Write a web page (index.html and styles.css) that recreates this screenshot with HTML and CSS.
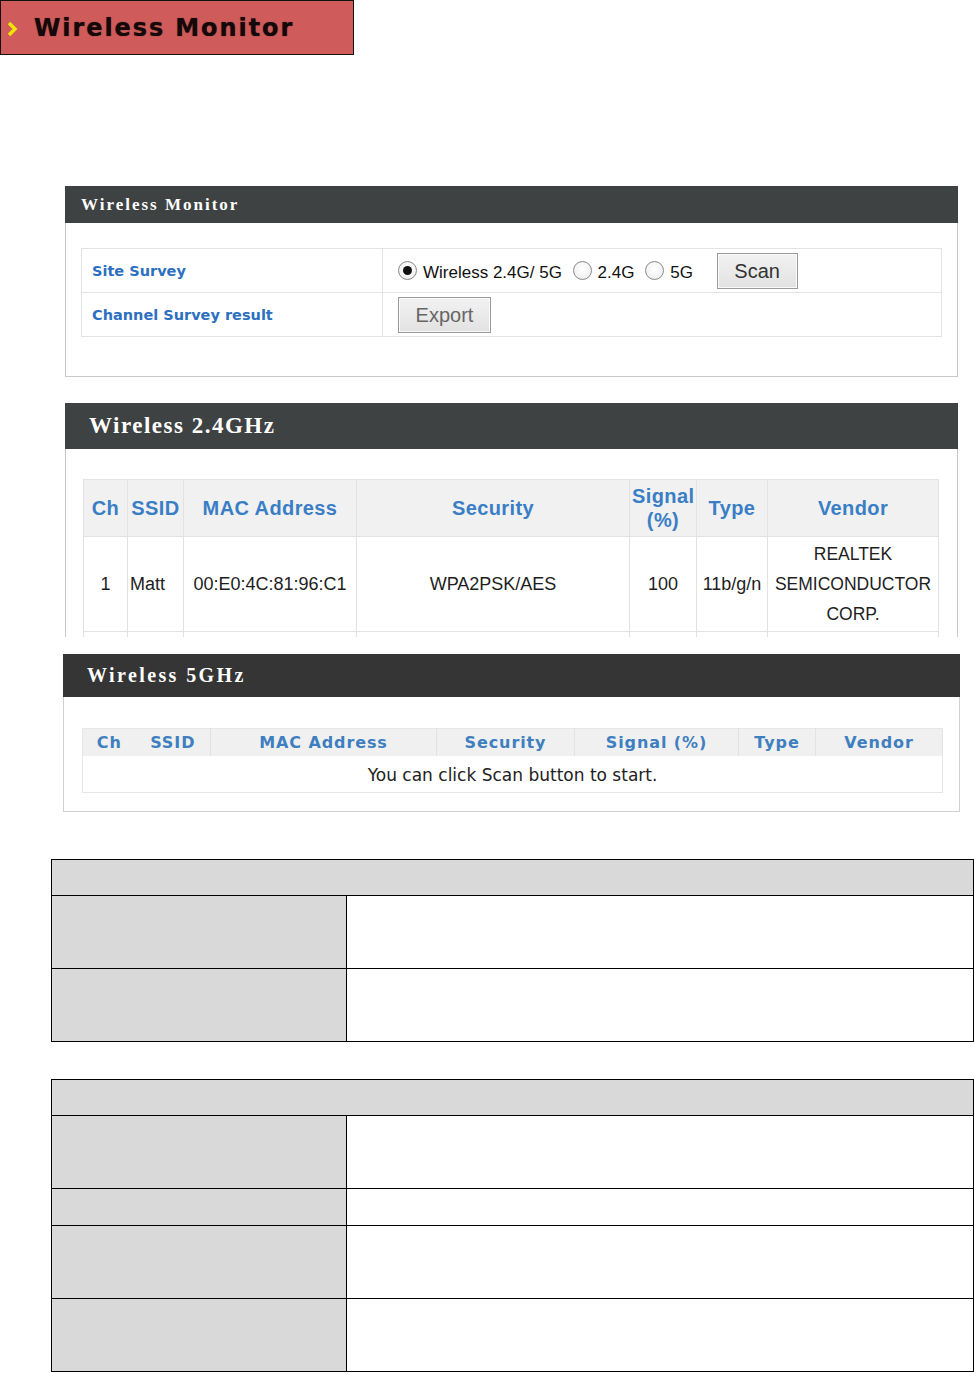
FILE: index.html
```html
<!DOCTYPE html>
<html>
<head>
<meta charset="utf-8">
<link rel="stylesheet" href="styles.css">
</head>
<body>
<div class="banner">
  <svg class="chev" width="12" height="16" viewBox="0 0 12 16"><polyline points="3,2 9,8 3,14" fill="none" stroke="#f2e400" stroke-width="3.4"/></svg>
  <span class="banner-text">Wireless Monitor</span>
</div>

<div class="panel p1">
  <div class="panel-head h1">Wireless Monitor</div>
  <div class="panel-body b1">
    <table class="survey">
      <colgroup><col class="c-label"><col></colgroup>
      <tr>
        <td class="lbl">Site Survey</td>
        <td class="ctl">
          <span class="radio on"></span><span class="rtext">Wireless 2.4G/ 5G</span>
          <span class="radio"></span><span class="rtext">2.4G</span>
          <span class="radio"></span><span class="rtext">5G</span>
          <span class="btn scan">Scan</span>
        </td>
      </tr>
      <tr>
        <td class="lbl">Channel Survey result</td>
        <td class="ctl"><span class="btn export">Export</span></td>
      </tr>
    </table>
  </div>
</div>

<div class="panel p2">
  <div class="panel-head h2">Wireless 2.4GHz</div>
  <div class="panel-body b2">
    <table class="scan24">
      <colgroup>
        <col style="width:44px"><col style="width:56px"><col style="width:173px"><col style="width:273px"><col style="width:67px"><col style="width:71px"><col style="width:171px">
      </colgroup>
      <tr class="hd">
        <th>Ch</th><th>SSID</th><th>MAC Address</th><th>Security</th><th>Signal<br>(%)</th><th>Type</th><th>Vendor</th>
      </tr>
      <tr class="row">
        <td>1</td><td class="left">Matt</td><td>00:E0:4C:81:96:C1</td><td>WPA2PSK/AES</td><td>100</td><td>11b/g/n</td><td class="vendor">REALTEK SEMICONDUCTOR CORP.</td>
      </tr>
      <tr class="row2">
        <td></td><td></td><td></td><td></td><td></td><td></td><td></td>
      </tr>
    </table>
  </div>
</div>

<div class="panel p3">
  <div class="panel-head h3">Wireless 5GHz</div>
  <div class="panel-body b3">
    <table class="scan5">
      <colgroup>
        <col style="width:53px"><col style="width:75px"><col style="width:226px"><col style="width:138px"><col style="width:164px"><col style="width:77px"><col style="width:127px">
      </colgroup>
      <tr class="hd">
        <th class="nb">Ch</th><th class="nb">SSID</th><th>MAC Address</th><th>Security</th><th>Signal (%)</th><th>Type</th><th>Vendor</th>
      </tr>
      <tr class="row">
        <td colspan="7">You can click Scan button to start.</td>
      </tr>
    </table>
  </div>
</div>

<table class="doc doc-a">
  <colgroup><col class="ck"><col></colgroup>
  <tr class="dh"><td colspan="2"></td></tr>
  <tr class="tall"><td class="k"></td><td class="v"></td></tr>
  <tr class="tall"><td class="k"></td><td class="v"></td></tr>
</table>

<table class="doc doc-b">
  <colgroup><col class="ck"><col></colgroup>
  <tr class="dh"><td colspan="2"></td></tr>
  <tr class="tall"><td class="k"></td><td class="v"></td></tr>
  <tr class="short"><td class="k"></td><td class="v"></td></tr>
  <tr class="tall"><td class="k"></td><td class="v"></td></tr>
  <tr class="tall"><td class="k"></td><td class="v"></td></tr>
</table>
</body>
</html>
```

FILE: styles.css
```css
* { box-sizing: border-box; }
html, body { margin: 0; padding: 0; background: #fff; }
body { width: 974px; font-family: "Liberation Sans", Arial, sans-serif; }

.banner {
  width: 354px;
  height: 55px;
  border: 1px solid #111;
  background: #cf5b5b;
  display: flex;
  align-items: center;
}
.chev { margin-left: 5px; margin-top: 2px; }
.banner-text {
  margin-left: 16px;
  margin-top: 1px;
  font-family: "DejaVu Sans", Verdana, sans-serif;
  font-weight: bold;
  font-size: 24px;
  letter-spacing: 1.9px;
  color: #150808;
  text-shadow: 0 0 1px rgba(0,0,0,0.6);
}

.panel-head {
  background: #3f4243;
  color: #fff;
  font-family: "Liberation Serif", "Times New Roman", serif;
  font-weight: bold;
  display: flex;
  align-items: center;
}
.panel-body {
  border: 1px solid #c9c9c9;
  border-top: 0;
  background: #fff;
}

.p1 { margin: 131px 0 0 65px; width: 893px; }
.h1 { height: 37px; font-size: 17px; letter-spacing: 2px; padding-left: 16px; }
.b1 { padding: 25px 15px 39px 15px; }

.survey { width: 100%; border-collapse: collapse; }
.survey td { border: 1px solid #e3e3e3; height: 44px; padding: 0; }
.c-label { width: 301px; }
.lbl {
  font-family: "DejaVu Sans", Verdana, sans-serif;
  font-weight: bold;
  font-size: 14.5px;
  color: #2d6fc0;
  padding-left: 10px !important;
}
.ctl { padding-left: 15px !important; white-space: nowrap; font-size: 17px; color: #111; }
.radio {
  display: inline-block;
  width: 19px; height: 19px;
  border: 1px solid #8a8a8a;
  border-radius: 50%;
  background: radial-gradient(circle at 50% 40%, #ffffff 0%, #f1f1f1 70%, #dcdcdc 100%);
  vertical-align: -2px;
  position: relative;
  margin-right: 6px;
}
.radio.on::after {
  content: "";
  position: absolute;
  left: 4px; top: 4px;
  width: 9px; height: 9px;
  border-radius: 50%;
  background: #111;
}
.rtext { margin-right: 6px; }
.btn {
  display: inline-block;
  border: 1px solid #9a9a9a;
  background: linear-gradient(#f2f2f2, #e2e2e2);
  font-size: 20px;
  text-align: center;
  box-shadow: inset 0 0 0 1px #fafafa;
}
.scan { width: 81px; height: 36px; line-height: 34px; color: #333; margin-left: 13px; }
.export { width: 93px; height: 36px; line-height: 34px; color: #666; }

.p2 { margin: 26px 0 0 65px; width: 893px; }
.h2 { height: 46px; font-size: 23px; letter-spacing: 1.5px; padding-left: 24px; }
.b2 { height: 188px; overflow: hidden; border-bottom: 0; padding: 30px 19px 0 17px; }
.scan24 { border-collapse: collapse; table-layout: fixed; width: 855px; }
.scan24 th, .scan24 td { border: 1px solid #e2e2e2; padding: 0 2px; text-align: center; }
.scan24 .hd th {
  height: 57px;
  background: #f1f1f1;
  color: #3a7ec6;
  font-size: 20px;
  letter-spacing: 0.4px;
  line-height: 24px;
  font-weight: bold;
}
.scan24 .row td { height: 95px; font-size: 18px; color: #1e1e1e; white-space: nowrap; }
.scan24 .row td.left { text-align: left; }
.scan24 .row td.vendor { white-space: normal; font-size: 17.5px; line-height: 30px; padding: 0; }
.scan24 .row2 td { height: 40px; }

.p3 { margin: 17px 0 0 63px; width: 897px; }
.h3 { height: 43px; font-size: 20px; letter-spacing: 2.4px; padding-left: 24px; background: #353535; }
.b3 { padding: 31px 17px 18px 18px; border-color: #d0d0d0; }
.scan5 { border-collapse: collapse; table-layout: fixed; width: 860px; border: 1px solid #e6e6e6; }
.scan5 th {
  height: 27px;
  background: #f0f0f0;
  border-left: 1px solid #e2e2e2;
  font-family: "DejaVu Sans", Verdana, sans-serif;
  font-size: 16px;
  letter-spacing: 0.9px;
  font-weight: bold;
  color: #3f7fc0;
  padding: 0;
}
.scan5 th.nb { border-left: 0; }
.scan5 td {
  height: 37px;
  text-align: center;
  font-family: "DejaVu Sans", Verdana, sans-serif;
  font-size: 17px;
  color: #222;
  padding: 3px 0 0 0;
}

.doc {
  border-collapse: collapse;
  table-layout: fixed;
  width: 923px;
  margin-left: 51px;
}
.doc .ck { width: 295px; }
.doc td { border: 1px solid #000; padding: 0; }
.doc-a { margin-top: 47px; }
.doc-b { margin-top: 37px; }
.doc .dh td { height: 36px; background: #d9d9d9; }
.doc .tall td { height: 73px; }
.doc .short td { height: 37px; }
.doc td.k { background: #d9d9d9; }
.doc td.v { background: #fff; }
```
